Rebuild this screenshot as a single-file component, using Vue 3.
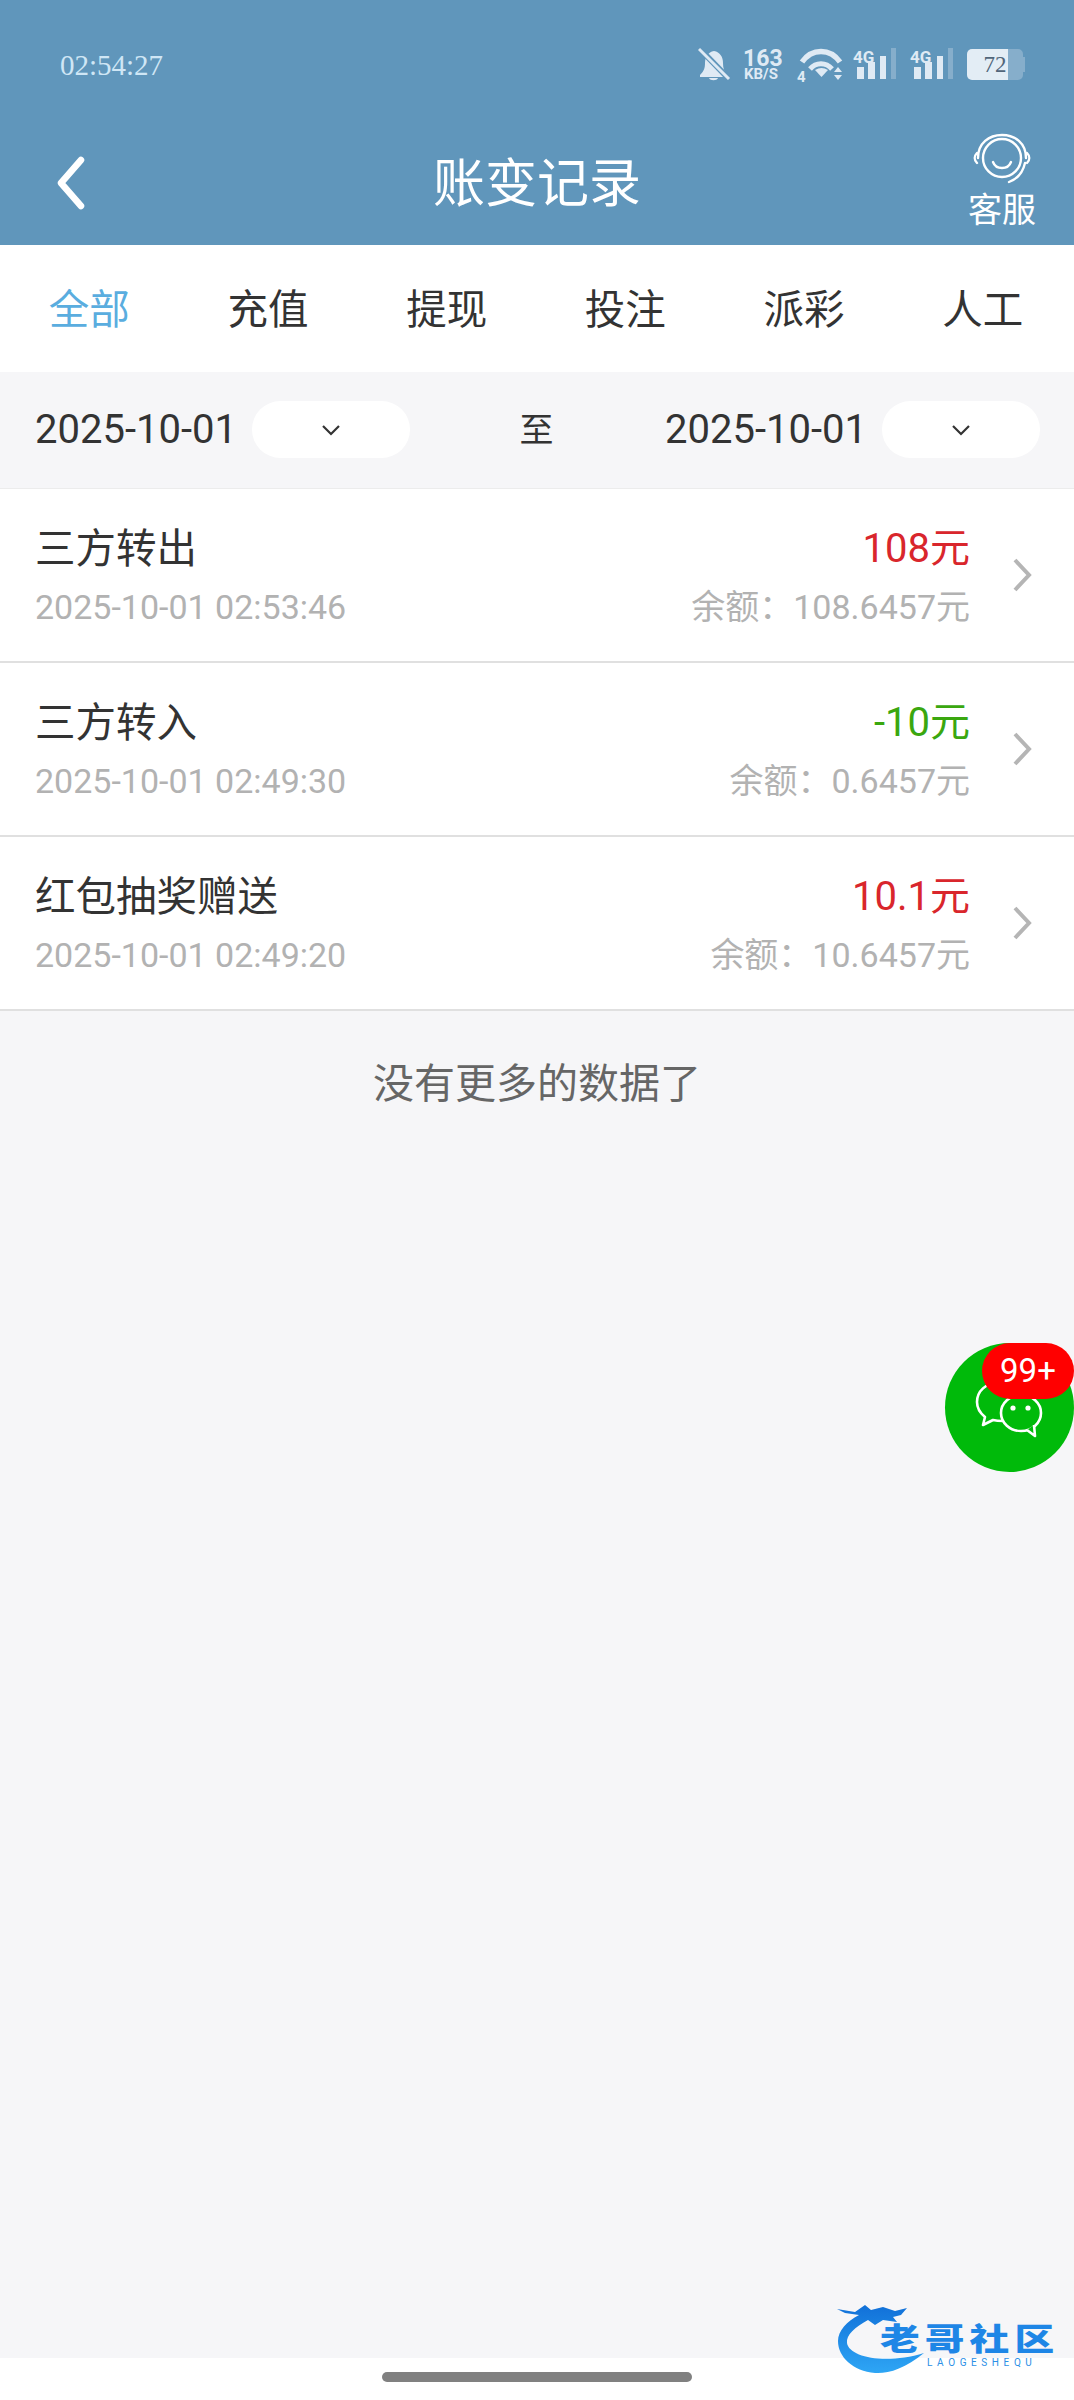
<template>
  <div class="page">
    <header class="top">
      <div class="status">
        <span class="clock">02:54:27</span>
        <svg class="status-icons" width="328" height="48" viewBox="0 -8 328 48">
          <!-- muted bell -->
          <g fill="#dfeaf4">
            <path d="M16 3c-6 1-9 6-9 12 0 5-1 8-5 12v2h27v-2c-3-4-4-7-4-12 0-6-3-11-9-12z" />
            <path d="M11 30h9c-1 3-8 3-9 0z" />
          </g>
          <path d="M1 0 L32 32" stroke="#6096bb" stroke-width="6" />
          <path d="M1 1 L31 31" stroke="#dfeaf4" stroke-width="3" />
          <!-- speed -->
          <text x="45" y="18" class="speed">163</text>
          <text x="46" y="31" class="kbs">KB/S</text>
          <!-- wifi -->
          <g fill="none" stroke="#dfeaf4">
            <path d="M104 14 C114 0 132 0 142 14" stroke-width="5.5" />
            <path d="M112 21 C118 14 128 14 134 21" stroke-width="5" />
          </g>
          <path d="M117 22 Q123.5 18 130 22 L123.5 29 Z" fill="#dfeaf4" />
          <path d="M136 24 L140 19 L144 24 Z M136 27 L144 27 L140 32 Z" fill="#dfeaf4" />
          <text x="99" y="34" class="wifi-four">4</text>
          <!-- first signal -->
          <g>
            <text x="155" y="15" class="net">4G</text>
            <rect x="159" y="19" width="7" height="12" fill="#dfeaf4" />
            <rect x="170" y="14" width="7" height="17" fill="#dfeaf4" />
            <rect x="182" y="8" width="6" height="23" fill="#dfeaf4" />
            <rect x="193" y="0" width="5" height="31" fill="#86aecb" />
          </g>
          <!-- second signal -->
          <g transform="translate(57 0)">
            <text x="155" y="15" class="net">4G</text>
            <rect x="159" y="19" width="7" height="12" fill="#dfeaf4" />
            <rect x="170" y="14" width="7" height="17" fill="#dfeaf4" />
            <rect x="182" y="8" width="6" height="23" fill="#dfeaf4" />
            <rect x="193" y="0" width="5" height="31" fill="#86aecb" />
          </g>
          <!-- battery -->
          <path d="M274 1 H310 V32 H274 a5 5 0 0 1 -5 -5 V6 a5 5 0 0 1 5 -5z" fill="#e3edf5" />
          <path d="M310 1 H320 a5 5 0 0 1 5 5 V9 H327 V24 H325 V27 a5 5 0 0 1 -5 5 H310z" fill="#86aecb" />
          <text x="297" y="24" class="batt" text-anchor="middle">72</text>
        </svg>
      </div>
      <div class="nav">
        <svg class="back" width="30" height="54" viewBox="0 0 30 54">
          <path d="M25 4 L5 27 L25 50" fill="none" stroke="#fff" stroke-width="6.5" stroke-linecap="round" stroke-linejoin="round" />
        </svg>
        <h1 class="title">账变记录</h1>
        <div class="service">
          <svg width="60" height="52" viewBox="0 0 60 52" fill="none" stroke="#fff" stroke-width="2.4" stroke-linecap="round">
            <circle cx="30" cy="25" r="19" />
            <path d="M6 25 C6 10 17 2 30 2 C43 2 54 10 54 25" />
            <path d="M5 20 C2 23 2 27 5 30 M55 20 C58 23 58 27 55 30" />
            <path d="M53 30 C51 39 45 46 37 49" />
            <path d="M21 29 C24 37 36 37 39 29" />
          </svg>
          <span class="service-label">客服</span>
        </div>
      </div>
    </header>

    <nav class="tabs">
      <span v-for="(tab, i) in tabs" :key="tab" :class="['tab', { active: i === 0 }]">{{ tab }}</span>
    </nav>

    <main class="content">
      <div class="filter">
        <div class="date-group">
          <span class="date">2025-10-01</span>
          <div class="pill">
            <svg width="20" height="12" viewBox="0 0 20 12"><path d="M2 2 L10 10 L18 2" fill="none" stroke="#333" stroke-width="2.2" /></svg>
          </div>
        </div>
        <span class="to">至</span>
        <div class="date-group">
          <span class="date">2025-10-01</span>
          <div class="pill">
            <svg width="20" height="12" viewBox="0 0 20 12"><path d="M2 2 L10 10 L18 2" fill="none" stroke="#333" stroke-width="2.2" /></svg>
          </div>
        </div>
      </div>

      <div class="list">
        <div v-for="row in rows" :key="row.time" class="row">
          <div class="row-left">
            <div class="row-title">{{ row.title }}</div>
            <div class="row-sub">{{ row.time }}</div>
          </div>
          <div class="row-right">
            <div :class="['amount', row.amount > 0 ? 'plus' : 'minus']">{{ row.amount }}元</div>
            <div class="row-sub">余额：{{ row.balance }}元</div>
          </div>
          <svg class="row-arrow" width="20" height="36" viewBox="0 0 20 36">
            <path d="M3 3 L17 18 L3 33" fill="none" stroke="#b5b5b5" stroke-width="4" />
          </svg>
        </div>
      </div>

      <p class="no-more">没有更多的数据了</p>
    </main>

    <footer class="gesture">
      <div class="home-bar"></div>
    </footer>

    <div class="chat">
      <svg width="72" height="60" viewBox="0 0 72 60" fill="none" stroke="#fff" stroke-width="2.6" stroke-linejoin="round">
        <path d="M24 2 C12 2 3 10 3 21 C3 27 6 32 11 36 L9 44 L19 39 C23 40 26 40 29 40" />
        <ellipse cx="47" cy="32" rx="20" ry="18" />
        <path d="M53 49 L61 55 L60 44" fill="#00ba0a" stroke="#fff" />
        <circle cx="39" cy="27" r="2.6" fill="#fff" stroke="none" />
        <circle cx="54" cy="27" r="2.6" fill="#fff" stroke="none" />
      </svg>
      <span class="badge">99+</span>
    </div>

    <div class="watermark">
      <svg class="dragon" width="95" height="72" viewBox="0 0 95 72">
        <defs>
          <linearGradient id="swoosh" x1="0" y1="0" x2="0" y2="1">
            <stop offset="0" stop-color="#1170d8" />
            <stop offset="1" stop-color="#2ea6f5" />
          </linearGradient>
        </defs>
        <path d="M2 6 L20 9 L30 2 L36 7 L48 4 L60 8 L72 5 L66 12 L58 14 L62 19 L48 17 L40 22 L33 17 C20 24 11 32 12 40 C14 54 50 62 89 50 C70 66 52 71 40 70 C18 68 3 54 3 38 C3 28 12 18 24 12 L10 10 Z" fill="url(#swoosh)" />
      </svg>
      <span class="wm-name">老哥社区</span>
      <span class="wm-latin">LAOGESHEQU</span>
    </div>
  </div>
</template>

<script setup>
const tabs = ["全部", "充值", "提现", "投注", "派彩", "人工"];

const rows = [
  { title: "三方转出", time: "2025-10-01 02:53:46", amount: 108, balance: "108.6457" },
  { title: "三方转入", time: "2025-10-01 02:49:30", amount: -10, balance: "0.6457" },
  { title: "红包抽奖赠送", time: "2025-10-01 02:49:20", amount: 10.1, balance: "10.6457" },
];
</script>

<style>
html,
body {
  margin: 0;
  background: #f6f6f8;
}
</style>

<style scoped>
.page {
  position: relative;
  display: flex;
  flex-direction: column;
  width: 1074px;
  height: 2400px;
  overflow: hidden;
  background: #f6f6f8;
  color: #333;
  font-family: Roboto, "Noto Sans CJK SC", sans-serif;
}

.top {
  height: 245px;
  background: #6096bb;
  color: #fff;
}

.status {
  display: flex;
  align-items: flex-start;
  justify-content: space-between;
  height: 130px;
  padding: 40px 48px 0 60px;
  box-sizing: border-box;
}

.clock {
  margin-top: 8px;
  font-family: "Liberation Serif", serif;
  font-size: 29px;
  line-height: 34px;
  color: #cfe6f5;
}

.speed {
  font: 700 23px Roboto, sans-serif;
  fill: #dfeaf4;
}

.kbs {
  font: 700 15px Roboto, sans-serif;
  fill: #dfeaf4;
}

.wifi-four {
  font: 700 15px Roboto, sans-serif;
  fill: #dfeaf4;
}

.net {
  font: 700 17px Roboto, sans-serif;
  fill: #dfeaf4;
}

.batt {
  font: 400 23px "Liberation Serif", serif;
  fill: #51667a;
}

.nav {
  position: relative;
  display: flex;
  align-items: center;
  justify-content: center;
  height: 115px;
}

.back {
  position: absolute;
  left: 56px;
  top: 26px;
}

.title {
  margin: -5px 0 0;
  font-size: 52px;
  font-weight: 400;
  line-height: 60px;
}

.service {
  position: absolute;
  right: 38px;
  top: 3px;
  display: flex;
  flex-direction: column;
  align-items: center;
  font-size: 34px;
  line-height: 40px;
}

.service-label {
  margin-top: 5px;
}

.tabs {
  display: grid;
  grid-template-columns: repeat(6, 1fr);
  align-items: center;
  height: 127px;
  padding: 0 2px 5px 0;
  box-sizing: border-box;
  background: #fff;
  font-size: 40.5px;
  text-align: center;
}

.tab.active {
  color: #5aaddf;
}

.content {
  flex: 1;
}

.filter {
  display: flex;
  align-items: center;
  justify-content: space-between;
  height: 116px;
  padding: 0 34px 0 35px;
  box-sizing: border-box;
}

.date-group {
  display: flex;
  align-items: center;
  gap: 15px;
}

.date {
  font-size: 40px;
  line-height: 56px;
}

.to {
  margin: -5px 2px 0 0;
  font-size: 34px;
}

.pill {
  display: flex;
  align-items: center;
  justify-content: center;
  width: 158px;
  height: 57px;
  margin-top: -1px;
  border-radius: 29px;
  background: #fff;
}

.list {
  border-top: 1px solid #ececec;
}

.row {
  display: flex;
  align-items: center;
  gap: 42px;
  height: 174px;
  padding: 0 42px 0 35px;
  box-sizing: border-box;
  background: #fff;
  border-bottom: 2px solid #e0e0e0;
}

.row-left {
  flex: 1;
  padding-top: 5px;
}

.row-right {
  padding-top: 5px;
  text-align: right;
}

.row-title {
  font-size: 40.5px;
  line-height: 58px;
}

.row-sub {
  font-size: 34px;
  line-height: 58px;
  color: #b2b2b2;
}

.amount {
  font-size: 40px;
  line-height: 58px;
}

.amount.plus {
  color: #d9262c;
}

.amount.minus {
  color: #3aa70f;
}

.no-more {
  margin: 0;
  font-size: 41px;
  line-height: 146px;
  text-align: center;
  color: #666;
}

.gesture {
  display: flex;
  justify-content: center;
  height: 42px;
  padding-top: 14px;
  box-sizing: border-box;
  background: #fff;
}

.home-bar {
  width: 310px;
  height: 10px;
  border-radius: 5px;
  background: #808080;
}

.chat {
  position: absolute;
  left: 945px;
  top: 1343px;
  display: flex;
  align-items: flex-start;
  justify-content: center;
  width: 129px;
  height: 129px;
  padding-top: 38px;
  box-sizing: border-box;
  border-radius: 50%;
  background: #00ba0a;
}

.badge {
  position: absolute;
  right: 0;
  top: 0;
  width: 92px;
  height: 56px;
  border-radius: 28px;
  background: #f00;
  color: #fff;
  font-size: 33px;
  line-height: 56px;
  text-align: center;
}

.watermark {
  position: absolute;
  left: 835px;
  top: 2303px;
  width: 230px;
  height: 76px;
}

.dragon {
  position: absolute;
  left: 0;
  top: 0;
}

.wm-name {
  position: absolute;
  left: 45px;
  top: 21px;
  font-size: 31px;
  font-weight: 900;
  line-height: 32px;
  letter-spacing: 4px;
  white-space: nowrap;
  color: #1e86e6;
  transform: scaleX(1.28);
  transform-origin: left center;
}

.wm-latin {
  position: absolute;
  left: 92px;
  top: 54px;
  font-size: 10px;
  line-height: 12px;
  letter-spacing: 4.6px;
  color: #2c8fe6;
}
</style>
